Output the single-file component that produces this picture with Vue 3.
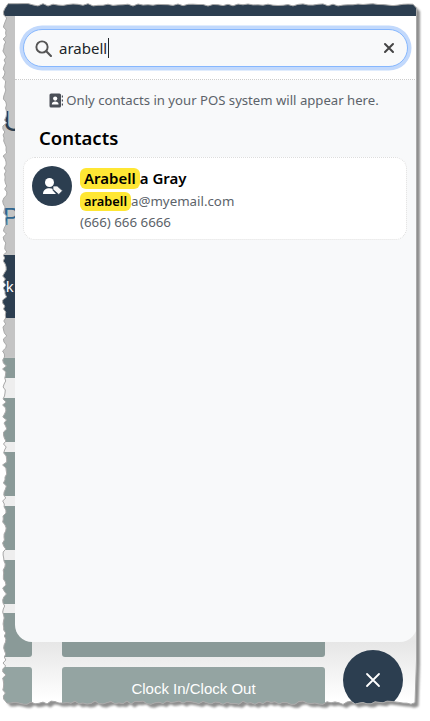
<script setup>
function torn(seedStart) {
  let s = seedStart
  const r = () => { s = (s * 9301 + 49297) % 233280; return s / 233280 }
  const pts = []
  for (let x = 8; x < 417; x += 5) pts.push([x, 3.6 + r() * 2.4])
  pts.push([416.5, 8])
  for (let y = 60; y < 700; y += 60) pts.push([416.5, y])
  for (let x = 415; x > 6; x -= 4) pts.push([x, 701 + r() * 3.4])
  for (let y = 699; y > 8; y -= 3) pts.push([2.5 + r() * 4.4, y])
  return pts
}
const edge = 'M' + torn(71).map(p => p[0].toFixed(1) + ' ' + p[1].toFixed(1)).join('L') + 'Z'
const mask = 'M0 0H430V721H0Z' + edge
</script>

<template>
  <div class="page">
    <div class="app">
      <div class="topbar"></div>
      <div class="strip">
        <div class="s-title">U</div>
        <div class="s-letter">P</div>
        <div class="s-dark"><span>k</span></div>
        <div class="s-grid">
          <div class="tile short"></div>
          <div class="tile"></div>
          <div class="tile"></div>
          <div class="tile"></div>
          <div class="tile"></div>
        </div>
      </div>
      <div class="btn-row">
        <div class="side"></div>
        <div class="wide"></div>
      </div>
      <div class="btn-row light">
        <div class="side"></div>
        <div class="wide">Clock In/Clock Out</div>
      </div>
    </div>

    <div class="sheet">
      <div class="search">
        <div class="field">
          <svg class="glass" viewBox="0 0 16 16"><circle cx="6.600" cy="6.600" r="5.300" fill="none" stroke="#555" stroke-width="1.800"/><path d="M10.600 10.600 15 15" stroke="#555" stroke-width="2" stroke-linecap="round"/></svg>
          <span class="typed">arabell</span><span class="caret"></span>
          <svg class="clear" viewBox="0 0 12 12"><path d="M2 2 10 10M10 2 2 10" stroke="#444" stroke-width="2" stroke-linecap="round"/></svg>
        </div>
      </div>
      <div class="body">
        <p class="hint">
          <svg class="book" viewBox="0 0 14 15"><rect x="0.500" y="0.500" width="11.500" height="14" rx="1.600" fill="#4a4f57"/><circle cx="6.200" cy="5.600" r="2.100" fill="#fff"/><path d="M2.800 11.400c0-2.200 1.600-3 3.400-3s3.400.8 3.400 3z" fill="#fff"/><path d="M12.800 2.500h1.200v2h-1.200zM12.800 6.500h1.200v2h-1.200zM12.800 10.500h1.200v2h-1.200z" fill="#4a4f57"/></svg>
          <span>Only contacts in your POS system will appear here.</span>
        </p>
        <h2>Contacts</h2>
        <div class="card">
          <div class="avatar">
            <svg viewBox="0 0 20 17"><circle cx="6.500" cy="4.500" r="4.500" fill="#fff"/><path d="M0 16c0-3.800 2.800-5.800 6.500-5.800 1.500 0 2.600.2 3.500.7l-.6 1.100L13 16z" fill="#fff"/><path d="M10 8h4.200l5.300 4.800-3.700 3.700L10 11.500z" fill="#f6f6f6" stroke="#2c3e50" stroke-width="0.700"/></svg>
          </div>
          <div class="info">
            <div class="name"><mark>Arabell</mark>a Gray</div>
            <div class="mail"><mark class="small">arabell</mark>a@myemail.com</div>
            <div class="phone">(666) 666 6666</div>
          </div>
        </div>
      </div>
    </div>

    <div class="fab">
      <svg viewBox="0 0 16 16"><path d="M2 2 14 14M14 2 2 14" stroke="#fff" stroke-width="1.800" stroke-linecap="round"/></svg>
    </div>

    <svg class="torn" viewBox="0 0 430 721">
      <defs>
        <clipPath id="outside"><path :d="mask" clip-rule="evenodd"/></clipPath>
      </defs>
      <path :d="mask" fill="#fff" fill-rule="evenodd"/>
      <g clip-path="url(#outside)">
        <path class="shade" :d="edge" transform="translate(3.500 3.500)" fill="#8f8f8f"/>
      </g>
      <path :d="edge" fill="none" stroke="#a9a9a9" stroke-width="1"/>
    </svg>
  </div>
</template>

<style scoped>
.page {
  position: relative;
  width: 430px;
  height: 721px;
  overflow: hidden;
  background: #fff;
  font-family: "Noto Sans", "Open Sans", sans-serif;
}
.app {
  height: 721px;
  display: flex;
  flex-direction: column;
  background: linear-gradient(#c4c4c4 0, #c4c4c4 356px, #eee 378px, #eee 620px, #e6e6e6 642px, #fff 700px);
}
.topbar {
  height: 16px;
  flex: none;
  background: #2c3e50;
}
.strip {
  height: 597px;
  flex: none;
  width: 15px;
  display: flex;
  flex-direction: column;
  overflow: hidden;
}
.s-title {
  height: 120px;
  flex: none;
  box-sizing: border-box;
  padding: 90px 0 0 3px;
  font: 30px/30px "Liberation Sans", sans-serif;
  color: #2c3e50;
}
.s-letter {
  height: 119px;
  flex: none;
  box-sizing: border-box;
  padding: 69px 0 0 3px;
  font: 24px/24px "Liberation Sans", sans-serif;
  color: #2f6690;
}
.s-dark {
  height: 63px;
  flex: none;
  background: #2c3e50;
  color: #fff;
  font: 15px/63px "Liberation Sans", sans-serif;
  padding-left: 6px;
}
.s-grid {
  margin-top: 40px;
  display: flex;
  flex-direction: column;
  gap: 10px;
}
.tile { background: #8a9a98; flex: none; height: 44px; }
.tile.short { height: 20px; margin-bottom: 10px; }
.btn-row {
  display: flex;
  gap: 30px;
  height: 44px;
  flex: none;
  margin-bottom: 10px;
}
.side { width: 32px; background: #8a9a98; border-radius: 0 3px 3px 0; }
.wide {
  width: 263px;
  background: #8a9a98;
  border-radius: 3px;
  color: #fff;
  font: 15px/44px "Liberation Sans", sans-serif;
  text-align: center;
}
.light .side, .light .wide { background: #94a4a2; }
.sheet {
  position: absolute;
  left: 15px;
  top: 16px;
  width: 402px;
  height: 626px;
  background: #f8f9fa;
  border-radius: 0 0 17px 17px;
  display: flex;
  flex-direction: column;
}
.search {
  background: #fff;
  height: 64px;
  flex: none;
  padding: 13px 9px 0 8px;
  box-sizing: border-box;
  border-bottom: 1px dotted #ccc;
}
.field {
  height: 38px;
  box-sizing: border-box;
  background: #f8f9fa;
  border: 1px solid #86b7fe;
  border-radius: 19px;
  box-shadow: 0 0 0 3.500px #c2d9fc;
  display: flex;
  align-items: center;
  padding: 0 12px 0 11px;
}
.glass { width: 17px; height: 17px; margin-right: 7px; flex: none; }
.typed { font-size: 15px; color: #212529; }
.caret { width: 1px; height: 20px; margin-left: 1px; background: #212529; }
.clear { width: 12px; height: 12px; margin-left: auto; }
.hint {
  margin: 0;
  padding: 10px 4px 0 0;
  display: flex;
  justify-content: center;
  align-items: center;
  gap: 3px;
  font-size: 13.150px;
  line-height: 20px;
  color: #5c636a;
}
.book { width: 14px; height: 15px; flex: none; }
h2 {
  margin: 0;
  padding: 16px 0 0 24px;
  font-size: 18.500px;
  line-height: 24px;
  font-weight: 600;
  color: #000;
}
.card {
  margin: 7px 10px 0 8px;
  height: 83px;
  box-sizing: border-box;
  background: #fff;
  border: 1px dotted #ddd;
  border-radius: 12px;
  display: flex;
  padding: 8px 8px;
  gap: 8px;
}
.avatar {
  width: 40px;
  height: 40px;
  border-radius: 50%;
  background: #2c3e50;
  display: flex;
  align-items: center;
  justify-content: center;
  flex: none;
}
.avatar svg { width: 20px; height: 17px; margin-left: 1px; }
.info {
  font-size: 13.300px;
  color: #5c636a;
  display: flex;
  flex-direction: column;
}
.name { font-size: 15px; font-weight: 600; color: #000; line-height: 21px; margin-top: 2px; }
.mail { line-height: 19px; margin-top: 3px; }
.phone { line-height: 21px; margin-top: 1px; }
mark {
  display: inline-block;
  background: #ffe734;
  color: #000;
  border-radius: 6px;
  padding: 0 4px;
  line-height: 21px;
}
mark.small { font-size: 12.800px; font-weight: 600; line-height: 19px; }
.fab {
  position: absolute;
  left: 343px;
  top: 650px;
  width: 60px;
  height: 60px;
  border-radius: 50%;
  background: #2c3e50;
  display: flex;
  align-items: center;
  justify-content: center;
}
.fab svg { width: 16px; height: 16px; }
.torn {
  position: absolute;
  left: 0;
  top: 0;
  width: 430px;
  height: 721px;
  pointer-events: none;
}
.shade { filter: blur(1px); }
</style>
